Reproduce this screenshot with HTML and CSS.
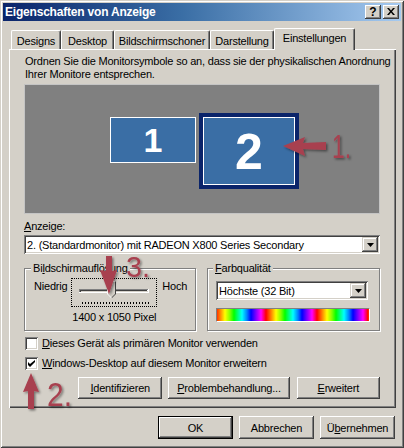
FILE: index.html
```html
<!DOCTYPE html>
<html lang="de">
<head>
<meta charset="utf-8">
<title>Eigenschaften von Anzeige</title>
<link rel="stylesheet" href="styles.css">
</head>
<body>
<div class="window">
  <div class="titlebar">
    <span class="title">Eigenschaften von Anzeige</span>
    <div class="tbtns">
      <span class="tbtn q">?</span>
      <span class="tbtn"><svg width="8" height="7" viewBox="0 0 8 7"><path d="M0 0h2l2 2.5L6 0h2L5 3.5 8 7H6L4 4.5 2 7H0l3-3.5z" fill="#000"/></svg></span>
    </div>
  </div>

  <div class="tabs">
    <div class="tab w1">Designs</div>
    <div class="tab w2">Desktop</div>
    <div class="tab w3">Bildschirmschoner</div>
    <div class="tab w4">Darstellung</div>
    <div class="tab w5 active">Einstellungen</div>
  </div>

  <div class="panel">
    <p class="intro">Ordnen Sie die Monitorsymbole so an, dass sie der physikalischen Anordnung<br>Ihrer Monitore entsprechen.</p>

    <div class="monitors">
      <div class="mon m1">1</div>
      <div class="mon m2"><div class="mon-in">2</div></div>
    </div>

    <div class="lbl"><u>A</u>nzeige:</div>
    <div class="combo">
      <span class="combo-text">2. (Standardmonitor) mit RADEON X800 Series Secondary</span>
      <span class="drop"><svg width="7" height="4" viewBox="0 0 7 4"><path d="M0 0h7L3.5 4z" fill="#000"/></svg></span>
    </div>

    <div class="groups">
      <fieldset class="group g1">
        <legend>Bi<u>l</u>dschirmauflösung</legend>
        <div class="res">
          <span class="lo">Niedrig</span>
          <div class="slider">
            <svg width="84" height="27" viewBox="0 0 84 27">
              <rect x="7" y="10" width="70" height="4" fill="#fff"/>
              <rect x="7" y="10" width="69" height="1" fill="#808080"/>
              <rect x="7" y="10" width="1" height="3" fill="#808080"/>
              <rect x="8" y="11" width="67" height="1" fill="#404040"/>
              <rect x="8" y="11" width="1" height="2" fill="#404040"/>
              <rect x="9" y="12" width="67" height="1" fill="#d4d0c8"/>
              <polygon points="35,2 44,2 44,15 39.5,19.5 35,15" fill="#d4d0c8"/>
              <polyline points="35.5,15 35.5,2.5 43.5,2.5" fill="none" stroke="#fff"/>
              <polyline points="43.5,2.5 43.5,15 39.5,19" fill="none" stroke="#404040"/>
              <line x1="39.5" y1="19" x2="35.5" y2="15" stroke="#fff"/>
              <line x1="10" y1="24" x2="77" y2="24" stroke="#000" stroke-width="2" stroke-dasharray="1 2"/>
            </svg>
          </div>
          <span class="hi">Hoch</span>
          <span class="px">1400 x 1050 Pixel</span>
        </div>
      </fieldset>
      <fieldset class="group g2">
        <legend><u>F</u>arbqualität</legend>
        <div class="combo small">
          <span class="combo-text">Höchste (32 Bit)</span>
          <span class="drop"><svg width="7" height="4" viewBox="0 0 7 4"><path d="M0 0h7L3.5 4z" fill="#000"/></svg></span>
        </div>
        <div class="colorbar"></div>
      </fieldset>
    </div>

    <div class="check first">
      <span class="cb"></span>
      <span><u>D</u>ieses Gerät als primären Monitor verwenden</span>
    </div>
    <div class="check">
      <span class="cb"><svg width="7" height="7" viewBox="0 0 7 7"><path d="M0 2v3l2 2 5-5V-0L2 4z" fill="#000"/></svg></span>
      <span><u>W</u>indows-Desktop auf diesem Monitor erweitern</span>
    </div>

    <div class="btnrow">
      <div class="btn b-ident"><span><u>I</u>dentifizieren</span></div>
      <div class="btn b-prob"><span><u>P</u>roblembehandlung...</span></div>
      <div class="btn b-erw"><span><u>E</u>rweitert</span></div>
    </div>
  </div>

  <div class="footer">
    <div class="btn fb default">OK</div>
    <div class="btn fb">Abbrechen</div>
    <div class="btn fb">Ü<u>b</u>ernehmen</div>
  </div>

  <svg class="annot" width="404" height="448" viewBox="0 0 404 448">
    <defs>
      <filter id="sh" x="-20%" y="-20%" width="150%" height="150%">
        <feDropShadow dx="1.5" dy="1.5" stdDeviation="1" flood-color="#000" flood-opacity="0.45"/>
      </filter>
    </defs>
    <g fill="#a8404f" filter="url(#sh)">
      <polygon points="283,146 305,137 303,143 326,142 326,150 303,149 305,156"/>
      <text x="332" y="158" class="anum" textLength="19" lengthAdjust="spacingAndGlyphs">1.</text>
      <polygon points="106,256 112,256 112,271 117,270 109,294 100,270 106,271"/>
      <text x="126" y="277" class="anum s3" textLength="24" lengthAdjust="spacingAndGlyphs">3.</text>
      <polygon points="31,373 39,392 34,391 34,409 28,409 28,391 23,392"/>
      <text x="47" y="406" class="anum" textLength="25" lengthAdjust="spacingAndGlyphs">2.</text>
    </g>
  </svg>
</div>
</body>
</html>
```

FILE: styles.css
```css
* { box-sizing: border-box; }

html, body {
  margin: 0;
  padding: 0;
  background: #d4d0c8;
}

body {
  font-family: "Liberation Sans", Arial, sans-serif;
  font-size: 11px;
  letter-spacing: -0.2px;
  color: #000;
}

u { text-decoration: underline; text-underline-offset: 1px; }

.window {
  position: relative;
  width: 404px;
  height: 448px;
  padding: 3px;
  background: #d4d0c8;
  box-shadow: inset 1px 1px #d4d0c8, inset -1px -1px #404040, inset 2px 2px #fff, inset -2px -2px #808080;
  display: flex;
  flex-direction: column;
}

/* title bar */
.titlebar {
  height: 18px;
  flex: none;
  background: linear-gradient(90deg, #0a246a 0%, #3a6ea5 45%, #a6caf0 100%);
  display: flex;
  align-items: center;
  padding: 0 2px 0 2px;
}
.title {
  flex: 1;
  color: #fff;
  font-weight: bold;
  font-size: 12px;
  letter-spacing: -0.2px;
  line-height: 18px;
}
.tbtns { display: flex; gap: 2px; }
.tbtn {
  width: 16px;
  height: 14px;
  background: #d4d0c8;
  box-shadow: inset -1px -1px #404040, inset 1px 1px #fff, inset -2px -2px #808080, inset 2px 2px #d4d0c8;
  display: flex;
  align-items: center;
  justify-content: center;
  padding-bottom: 1px;
}
.tbtn.q { font-weight: bold; font-size: 12px; line-height: 12px; letter-spacing: 0; }

/* tabs */
.tabs {
  height: 21px;
  flex: none;
  margin: 7px 0 0 8px;
  display: flex;
  align-items: flex-end;
  position: relative;
  z-index: 2;
}
.tab {
  height: 19px;
  background: #d4d0c8;
  border-top: 1px solid #fff;
  border-left: 1px solid #fff;
  border-right: 1px solid #404040;
  box-shadow: inset -1px 0 #808080;
  border-radius: 2px 2px 0 0;
  display: flex;
  align-items: center;
  justify-content: center;
  padding-top: 1px;
}
.w1 { width: 50px; }
.w2 { width: 53px; }
.w3 { width: 96px; }
.w4 { width: 64px; }
.w5 { width: 81px; }
.tab.active {
  height: 22px;
  margin-bottom: -1px;
  padding-top: 0;
  padding-bottom: 3px;
}

/* panel */
.panel {
  position: relative;
  margin-left: 6px;
  width: 387px;
  height: 359px;
  flex: none;
  padding: 6px 16px 0 15px;
  background: #d4d0c8;
  box-shadow: inset 1px 1px #fff, inset -1px -1px #404040, inset -2px -2px #808080;
}
.intro {
  margin: 0 -12px 0 1px;
  line-height: 13px;
  white-space: nowrap;
}

.monitors {
  position: relative;
  margin-top: 3px;
  height: 130px;
  background: #808080;
  border: 1px solid #c4c4c4;
}
.mon {
  position: absolute;
  background: #3a6ea5;
  color: #fff;
  font-weight: bold;
  display: flex;
  align-items: center;
  justify-content: center;
  letter-spacing: 0;
}
.m1 {
  left: 85px;
  top: 32px;
  width: 86px;
  height: 46px;
  border: 1px solid #fff;
  font-size: 34px;
}
.m2 {
  left: 174px;
  top: 28px;
  width: 100px;
  height: 76px;
  background: #0a246a;
  padding: 4px;
}
.mon-in {
  width: 100%;
  height: 100%;
  background: #3a6ea5;
  border: 1px solid #fff;
  display: flex;
  align-items: center;
  justify-content: center;
  font-size: 50px;
  padding-top: 2px;
}

.lbl {
  margin-top: 6px;
  line-height: 13px;
}

.combo {
  position: relative;
  height: 19px;
  margin-top: 2px;
  background: #fff;
  box-shadow: inset 1px 1px #808080, inset -1px -1px #fff, inset 2px 2px #404040, inset -2px -2px #d4d0c8;
  display: flex;
  align-items: center;
  padding: 0 2px 0 3px;
}
.combo-text { flex: 1; white-space: nowrap; overflow: hidden; }
.drop {
  width: 16px;
  height: 15px;
  background: #d4d0c8;
  box-shadow: inset -1px -1px #404040, inset 1px 1px #d4d0c8, inset -2px -2px #808080, inset 2px 2px #fff;
  display: flex;
  align-items: center;
  justify-content: center;
}

/* group boxes */
.groups {
  display: flex;
  gap: 11px;
  margin-top: 8px;
}
.group {
  margin: 0;
  min-width: 0;
  border: 1px solid #808080;
  box-shadow: 1px 1px 0 #fff, inset 1px 1px 0 #fff;
  height: 69px;
}
.group legend {
  padding: 0 2px;
  margin-left: -3px;
  line-height: 13px;
  background: #d4d0c8;
}
.g1 { width: 172px; padding: 3px 6px 0 9px; }
.g2 { flex: 1; padding: 6px 6px 0 8px; }

.res {
  display: grid;
  grid-template-columns: auto 86px auto;
  column-gap: 2px;
  align-items: start;
  line-height: 13px;
}
.lo { margin-top: 2px; }
.hi { margin-top: 2px; margin-left: 3px; }
.slider {
  width: 86px;
  height: 29px;
  border: 1px dotted #000;
}
.slider svg { display: block; }
.px {
  grid-column: 2;
  text-align: center;
  white-space: nowrap;
  margin-top: 4px;
  justify-self: center;
}

.combo.small {
  margin-top: 0;
  width: 152px;
}
.colorbar {
  margin-top: 8px;
  width: 154px;
  height: 14px;
  border: 1px solid #fff;
  border-top-color: #808080;
  border-left-color: #808080;
  background: repeating-linear-gradient(90deg,
    #ff0000 0px, #ff8000 5px, #ffff00 10px, #80ff00 15px, #00ff00 19px,
    #00ff80 23px, #00ffff 27px, #0080ff 32px, #0000ff 36px, #8000ff 41px,
    #ff00ff 46px, #ff0000 51px);
  background-position: -2px 0;
}

/* checkboxes */
.check {
  display: flex;
  align-items: center;
  gap: 4px;
  margin-top: 7px;
  padding-left: 1px;
  line-height: 13px;
}
.check.first { margin-top: 6px; }
.cb {
  width: 13px;
  height: 13px;
  flex: none;
  background: #fff;
  box-shadow: inset 1px 1px #808080, inset -1px -1px #fff, inset 2px 2px #404040, inset -2px -2px #d4d0c8;
  display: flex;
  align-items: center;
  justify-content: center;
}
.cb svg { display: block; }

/* buttons */
.btn {
  height: 22px;
  background: #d4d0c8;
  box-shadow: inset -1px -1px #404040, inset 1px 1px #fff, inset -2px -2px #808080, inset 2px 2px #d4d0c8;
  display: flex;
  align-items: center;
  justify-content: center;
  white-space: nowrap;
}
.btnrow {
  display: flex;
  margin-top: 7px;
  margin-left: 54px;
  gap: 6px;
}
.b-ident { width: 85px; }
.b-prob { width: 122px; }
.b-erw { width: 84px; margin-left: 1px; }

.footer {
  display: flex;
  justify-content: flex-end;
  gap: 6px;
  margin-top: 8px;
  padding-right: 6px;
}
.fb { width: 75px; height: 23px; }
.btn.default {
  box-shadow: inset 0 0 0 1px #000, inset -2px -2px #404040, inset 2px 2px #fff, inset -3px -3px #808080;
}

/* annotations */
.annot {
  position: absolute;
  left: 0;
  top: 0;
  pointer-events: none;
}
.anum {
  font-family: "Liberation Sans", Arial, sans-serif;
  font-size: 34px;
  letter-spacing: 0;
}
.anum.s3 { font-size: 29px; }
```
